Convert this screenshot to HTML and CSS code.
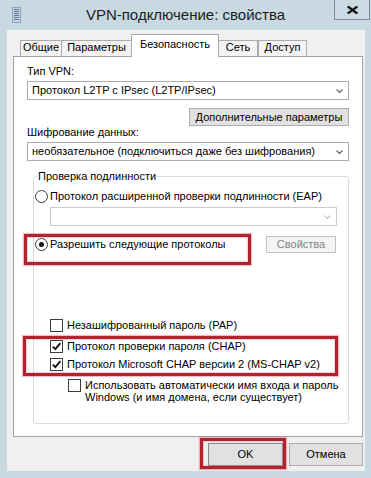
FILE: index.html
```html
<!DOCTYPE html>
<html lang="ru">
<head>
<meta charset="utf-8">
<title>VPN-подключение: свойства</title>
<link rel="stylesheet" href="styles.css">
</head>
<body>
<div class="window">
  <header class="titlebar">
    <div class="app-icon">
      <svg width="9" height="16" viewBox="0 0 9 16"><rect x="0.5" y="0.5" width="8" height="15" fill="#c3d2df" stroke="#8ea3b7"/><path d="M2 2.5h5M2 4.5h5M2 6.5h5M2 8.5h5M2 10.5h5M2 12.5h5" stroke="#5f7b97" stroke-width="1"/></svg>
    </div>
    <div class="title">VPN-подключение: свойства</div>
    <div class="close"><svg width="11" height="8" viewBox="0 0 11 8"><path d="M1.5 1 L9.5 7 M9.5 1 L1.5 7" stroke="#111" stroke-width="2.2" stroke-linecap="square"/></svg></div>
  </header>
  <div class="client">
    <div class="tabs">
      <div class="tab t-general">Общие</div>
      <div class="tab t-params">Параметры</div>
      <div class="tab t-security active">Безопасность</div>
      <div class="tab t-net">Сеть</div>
      <div class="tab t-access">Доступ</div>
    </div>
    <div class="panel">
      <div class="label label-type">Тип VPN:</div>
      <div class="combo combo-type"><span>Протокол L2TP с IPsec (L2TP/IPsec)</span><svg class="chev" width="7" height="4" viewBox="0 0 7 4"><path d="M0.5 0.5 L3.5 3.5 L6.5 0.5" fill="none" stroke="#666" stroke-width="1.2"/></svg></div>
      <div class="adv-row"><div class="btn btn-adv">Дополнительные параметры</div></div>
      <div class="label">Шифрование данных:</div>
      <div class="combo combo-enc"><span>необязательное (подключиться даже без шифрования)</span><svg class="chev" width="7" height="4" viewBox="0 0 7 4"><path d="M0.5 0.5 L3.5 3.5 L6.5 0.5" fill="none" stroke="#666" stroke-width="1.2"/></svg></div>
      <fieldset class="auth">
        <legend>Проверка подлинности</legend>
        <div class="opt radio-row"><span class="radio"></span><span>Протокол расширенной проверки подлинности (EAP)</span></div>
        <div class="combo combo-eap"><span></span><svg class="chev" width="7" height="4" viewBox="0 0 7 4"><path d="M0.5 0.5 L3.5 3.5 L6.5 0.5" fill="none" stroke="#c4c4c4" stroke-width="1.2"/></svg></div>
        <div class="allow-row">
          <div class="opt"><span class="radio checked"></span><span>Разрешить следующие протоколы</span></div>
          <div class="btn btn-disabled">Свойства</div>
        </div>
        <div class="opt cb-row cb-pap"><span class="check"></span><span>Незашифрованный пароль (PAP)</span></div>
        <div class="opt cb-row cb-chap"><span class="check"><svg width="11" height="11" viewBox="0 0 11 11"><path d="M1.8 5.6 L4.3 8.2 L9.4 2.2" fill="none" stroke="#111" stroke-width="1.8"/></svg></span><span>Протокол проверки пароля (CHAP)</span></div>
        <div class="opt cb-row cb-ms"><span class="check"><svg width="11" height="11" viewBox="0 0 11 11"><path d="M1.8 5.6 L4.3 8.2 L9.4 2.2" fill="none" stroke="#111" stroke-width="1.8"/></svg></span><span>Протокол Microsoft CHAP версии 2 (MS-CHAP v2)</span></div>
        <div class="opt cb-row cb-win"><span class="check"></span><span class="multi">Использовать автоматически имя входа и пароль<br>Windows (и имя домена, если существует)</span></div>
      </fieldset>
    </div>
    <div class="dialog-buttons">
      <div class="btn btn-ok">OK</div>
      <div class="btn btn-cancel">Отмена</div>
    </div>
  </div>
  <div class="mark mark-allow"></div>
  <div class="mark mark-chap"></div>
  <div class="mark mark-ok"></div>
</div>
</body>
</html>
```

FILE: styles.css
```css
* { box-sizing: border-box; }
html, body { margin: 0; padding: 0; }
body {
  background: #c8d9e2;
  font-family: "Liberation Sans", Arial, sans-serif;
  font-size: 11px;
  color: #000;
}
.window {
  position: relative;
  width: 371px;
  height: 478px;
  background: #c8d9e2;
  overflow: hidden;
}
.titlebar {
  height: 30px;
  display: grid;
  grid-template-columns: 1fr auto 1fr;
}
.app-icon { padding: 7px 0 0 12px; }
.app-icon svg { display: block; }
.title {
  font-size: 15px;
  line-height: 20px;
  padding-top: 5px;
  color: #1c1c1c;
}
.close {
  justify-self: end;
  align-self: start;
  width: 36px;
  height: 20px;
  margin-right: 1px;
  border: 1px solid #7f8f99;
  border-top: none;
  background: #cbdbe4;
  display: flex;
  align-items: center;
  justify-content: center;
}
.close svg { display: block; }

.client {
  margin-left: 7px;
  width: 358px;
  height: 441px;
  background: #f0f0f0;
  padding: 4px 2px 0 6px;
}
.tabs {
  display: flex;
  align-items: flex-end;
  height: 22px;
  padding-left: 7px;
  position: relative;
  z-index: 1;
}
.tab {
  height: 16px;
  border: 1px solid #acacac;
  border-bottom: none;
  background: #f3f3f3;
  line-height: 13px;
  text-align: center;
  white-space: nowrap;
  margin-left: -1px;
}
.t-general { width: 42px; margin-left: 0; }
.t-params { width: 71px; }
.t-security { width: 88px; }
.t-net { width: 40px; }
.t-access { width: 49px; margin-left: 0; }
.tab.active {
  height: 23px;
  margin-bottom: -1px;
  background: #fff;
  padding-top: 3px;
}

.panel {
  height: 381px;
  background: #fff;
  border: 1px solid #a3a3a3;
  padding: 8px 13px 0 13px;
}
.label { line-height: 13px; white-space: nowrap; }
.combo {
  height: 19px;
  border: 1px solid #acacac;
  background: #fff;
  display: flex;
  align-items: center;
  justify-content: space-between;
  padding: 0 5px 0 4px;
  line-height: 13px;
  white-space: nowrap;
}
.chev { display: block; flex: none; }
.combo-type { margin-top: 3px; }
.combo-enc { margin-top: 3px; }
.adv-row {
  display: flex;
  justify-content: flex-end;
  margin-top: 8px;
}
.btn {
  height: 18px;
  border: 1px solid #adadad;
  background: #e1e1e1;
  display: flex;
  align-items: center;
  justify-content: center;
  line-height: 13px;
  white-space: nowrap;
}
.btn-adv { width: 160px; }

.auth {
  margin: 9px 0 0 6px;
  border: 1px solid #dadada;
  border-radius: 3px;
  padding: 6px 1px 20px 1px;
  min-width: 0;
}
.auth legend {
  padding: 0 1px;
  margin-left: 2px;
  line-height: 13px;
}
.opt {
  display: flex;
  align-items: center;
  line-height: 13px;
  white-space: nowrap;
}
.radio-row { height: 14px; }
.radio {
  width: 13px;
  height: 13px;
  border: 1px solid #3c3c3c;
  border-radius: 50%;
  background: #fff;
  margin-right: 2px;
  display: flex;
  align-items: center;
  justify-content: center;
  flex: none;
}
.radio.checked::after {
  content: "";
  width: 5px;
  height: 5px;
  border-radius: 50%;
  background: #111;
}
.combo-eap {
  margin: 4px 10px 0 15px;
  border-color: #cccccc;
}
.allow-row {
  display: flex;
  justify-content: space-between;
  align-items: center;
  margin-top: 10px;
  padding-right: 11px;
}
.btn-disabled {
  width: 70px;
  height: 17px;
  background: #f4f4f4;
  border-color: #c2c2c2;
  color: #858585;
}
.check {
  width: 13px;
  height: 13px;
  border: 1px solid #3c3c3c;
  background: #fff;
  margin-right: 4px;
  flex: none;
  display: flex;
  align-items: center;
  justify-content: center;
}
.check svg { display: block; }
.cb-row { height: 13px; margin-left: 15px; }
.cb-pap { margin-top: 66px; }
.cb-chap { margin-top: 8px; }
.cb-ms { margin-top: 5px; }
.cb-win {
  margin-top: 8px;
  margin-left: 33px;
  height: auto;
  align-items: flex-start;
}
.multi { line-height: 12px; }

.dialog-buttons {
  display: flex;
  justify-content: flex-end;
  gap: 6px;
  margin-top: 6px;
}
.dialog-buttons .btn { height: 23px; }
.btn-ok { width: 75px; border-color: #8a8a8a; }
.btn-cancel { width: 74px; }

.mark {
  position: absolute;
  border: 3px solid #b3232f;
  box-shadow: 0 0 1px 1px rgba(200, 70, 80, 0.35), inset 0 0 1px 1px rgba(220, 120, 130, 0.35);
}
.mark-allow { left: 24px; top: 234px; width: 227px; height: 31px; }
.mark-chap { left: 23px; top: 336px; width: 315px; height: 40px; }
.mark-ok { left: 200px; top: 438px; width: 86px; height: 31px; }
```
